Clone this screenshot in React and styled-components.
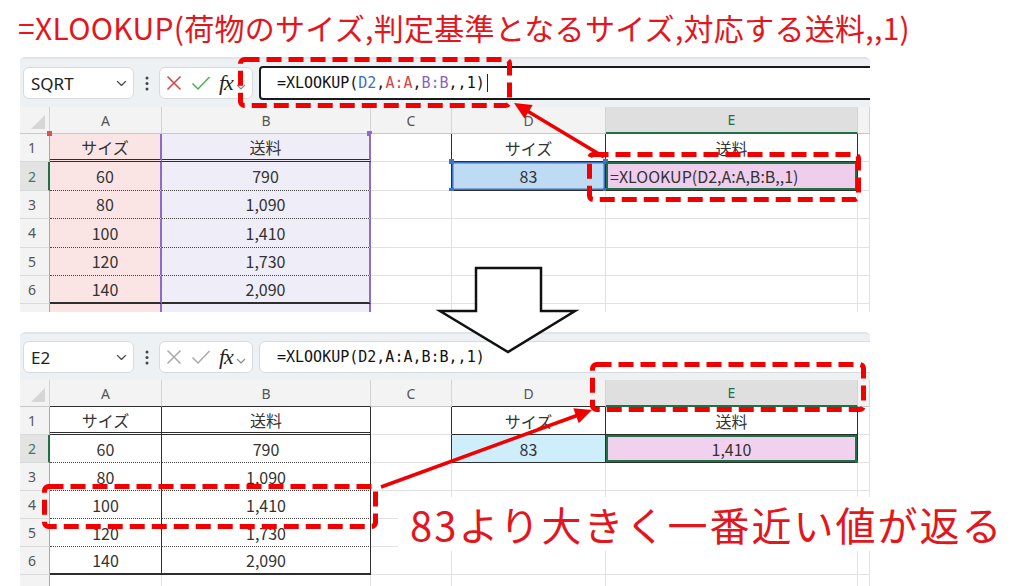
import styled, { createGlobalStyle, css } from "styled-components";

const RED = "#f00000";
const TEXT_RED = "#e3161d";
const GRID = "#e2e2e2";
const DARK = "#2e2e2e";
const GREEN = "#1e7145";
const PURPLE = "#8e6bc9";
const BLUE = "#3f72c4";

const SIZES = ["60", "80", "100", "120", "140"];
const FEES = ["790", "1,090", "1,410", "1,730", "2,090"];
const COLS = ["A", "B", "C", "D", "E"];

const GlobalStyle = createGlobalStyle`
  body {
    margin: 0;
    background: #fff;
    font-family: "Noto Sans CJK JP", "Noto Sans", sans-serif;
  }
`;

const Page = styled.div`
  position: relative;
  width: 1024px;
  height: 586px;
  overflow: hidden;
  background: #fff;
`;

const Title = styled.h1`
  margin: 0;
  height: 57px;
  padding-left: 18px;
  font: 400 30px/54px "Noto Sans CJK JP", sans-serif;
  letter-spacing: 0.3px;
  color: ${TEXT_RED};
  white-space: nowrap;
`;

const Shot = styled.section`
  width: 850px;
  height: ${(p) => p.$h}px;
  margin-left: 20px;
  overflow: hidden;
  background: #fff;
`;

const Gap = styled.div`
  height: 20px;
`;

/* ---- formula bar ---- */

const Toolbar = styled.div`
  display: flex;
  align-items: center;
  height: ${(p) => p.$h}px;
  box-sizing: border-box;
  padding-left: 3px;
  background: #eef1f4;
  border-top: 2px solid #e1e5e9;
  border-radius: 5px 5px 0 0;
`;

const Box = styled.div`
  display: flex;
  align-items: center;
  height: 32px;
  box-sizing: border-box;
  background: #fff;
  border: 1px solid #d7dade;
  border-radius: 6px;
`;

const NameBox = styled(Box)`
  width: 111px;
  justify-content: space-between;
  padding: 0 6px 0 7px;
  font: 400 17px "Noto Sans", sans-serif;
  color: #222;
`;

const Kebab = styled.div`
  width: 25px;
  display: flex;
  justify-content: center;
`;

const FuncBox = styled(Box)`
  width: 94px;
  padding-left: 6px;
`;

const Fx = styled.span`
  margin-left: 8px;
  font: italic 400 22px/1 "Liberation Serif", serif;
  color: #222;
  letter-spacing: -1px;
`;

const FormulaBox = styled(Box)`
  flex: 1;
  margin-left: 6px;
  margin-right: -20px;
  height: ${(p) => (p.$editing ? 34 : 32)}px;
  border: ${(p) => (p.$editing ? `2px solid #1a1a1a` : `1px solid #d7dade`)};
  border-radius: ${(p) => (p.$editing ? 4 : 6)}px;
  padding-left: ${(p) => (p.$editing ? 16 : 17)}px;
  font: 400 15px "DejaVu Sans Mono", monospace;
  color: #111;
  white-space: nowrap;
`;

const Ref = styled.span`
  color: ${(p) => p.$c};
`;

const Caret = styled.span`
  display: inline-block;
  width: 1px;
  height: 18px;
  margin-left: 2px;
  background: #222;
`;

/* ---- grid ---- */

const Grid = styled.div`
  display: grid;
  grid-template-columns: 30px 112px 209px 81px 154px 252px 12px;
  grid-template-rows: 27px repeat(7, ${(p) => p.$row}px);
`;

const Corner = styled.div`
  position: relative;
  background: #f3f3f3;
  border-right: 1px solid #d4d4d4;
  border-bottom: 1px solid #c8c8c8;
  &::after {
    content: "";
    position: absolute;
    right: 4px;
    bottom: 4px;
    border-style: solid;
    border-width: 0 0 14px 14px;
    border-color: transparent transparent #d6d6d6 transparent;
  }
`;

const ColHead = styled.div`
  display: flex;
  align-items: center;
  justify-content: center;
  box-sizing: border-box;
  background: ${(p) => (p.$active ? "#dfdfdf" : "#f3f3f3")};
  color: ${(p) => (p.$active ? GREEN : "#555")};
  border-right: 1px solid #d4d4d4;
  border-bottom: ${(p) => p.$bb};
  font: 400 14px "Noto Sans", sans-serif;
`;

const RowHead = styled.div`
  display: flex;
  align-items: center;
  box-sizing: border-box;
  padding-left: 8px;
  background: ${(p) => (p.$active ? "#e3e3e3" : "#f3f3f3")};
  color: ${(p) => (p.$active ? "#3d7a55" : "#555")};
  border-right: ${(p) => (p.$active ? `2px solid ${GREEN}` : "1px solid #a8a8a8")};
  border-bottom: 1px solid #dadada;
  font: 400 14px "Noto Sans", sans-serif;
`;

const Cell = styled.div`
  position: relative;
  display: flex;
  align-items: center;
  justify-content: ${(p) => (p.$left ? "flex-start" : "center")};
  box-sizing: border-box;
  padding: 0 4px;
  background: ${(p) => p.$fill || "#fff"};
  border-right: ${(p) => p.$br || `1px solid ${GRID}`};
  border-bottom: ${(p) => p.$bb || `1px solid ${GRID}`};
  ${(p) =>
    p.$sel &&
    css`
      box-shadow: inset 0 0 0 ${p.$selW || 2}px ${p.$sel};
    `}
  font: 400 16px "Noto Sans CJK JP", sans-serif;
  color: #333;
  white-space: nowrap;
`;

const Handle = styled.span`
  position: absolute;
  width: 5px;
  height: 5px;
  background: ${(p) => p.$c};
  ${(p) => (p.$top ? "top: -3px;" : "bottom: -3px;")}
  ${(p) => (p.$right ? "right: -3px;" : "left: -3px;")}
`;

const Caption = styled.div`
  position: absolute;
  left: 398px;
  top: 497px;
  padding: 0 12px;
  background: #fff;
  font: 400 40px/54px "Noto Sans CJK JP", sans-serif;
  letter-spacing: 2px;
  color: ${TEXT_RED};
  white-space: nowrap;
`;

const Overlay = styled.svg`
  position: absolute;
  left: 0;
  top: 0;
  pointer-events: none;
`;

/* ---- icons ---- */

const Chevron = ({ color = "#444", size = 11 }) => (
  <svg width={size} height={size * 0.6} viewBox="0 0 10 6">
    <path d="M1 1 L5 5 L9 1" fill="none" stroke={color} strokeWidth="1.2" />
  </svg>
);

const Dots = () => (
  <svg width="4" height="15" viewBox="0 0 4 15">
    <circle cx="2" cy="2" r="1.5" fill="#444" />
    <circle cx="2" cy="7.5" r="1.5" fill="#444" />
    <circle cx="2" cy="13" r="1.5" fill="#444" />
  </svg>
);

const Cancel = ({ color }) => (
  <svg width="16" height="16" viewBox="0 0 16 16">
    <path d="M1.5 1.5 L14.5 14.5 M14.5 1.5 L1.5 14.5" stroke={color} strokeWidth="1.5" fill="none" />
  </svg>
);

const Enter = ({ color }) => (
  <svg width="20" height="16" viewBox="0 0 20 16" style={{ marginLeft: 9 }}>
    <path d="M1.5 8.5 L7 14 L18.5 2" stroke={color} strokeWidth="1.5" fill="none" />
  </svg>
);

function RedArrow({ from, to }) {
  const [x1, y1] = from;
  const [x2, y2] = to;
  const len = Math.hypot(x2 - x1, y2 - y1);
  const ux = (x2 - x1) / len;
  const uy = (y2 - y1) / len;
  const hl = 17;
  const hw = 8;
  const bx = x2 - ux * hl;
  const by = y2 - uy * hl;
  const pts = [
    [x2, y2],
    [bx - uy * hw, by + ux * hw],
    [bx + uy * hw, by - ux * hw],
  ];
  return (
    <g>
      <line x1={x1} y1={y1} x2={bx + ux} y2={by + uy} stroke={RED} strokeWidth="3.5" />
      <polygon points={pts.map((p) => p.join(",")).join(" ")} fill={RED} />
    </g>
  );
}

const DashBox = ({ x, y, w, h }) => (
  <rect
    x={x}
    y={y}
    width={w}
    height={h}
    rx="4"
    fill="none"
    stroke={RED}
    strokeWidth="5"
    strokeDasharray="15 7"
  />
);

/* ---- sheet ---- */

function Sheet({ editing }) {
  const dark = `1px solid ${DARK}`;
  const headBottom = (col) => {
    if (col === "E") return `2px solid ${GREEN}`;
    if (!editing && col !== "C") return dark;
    return "1px solid #c8c8c8";
  };

  // row 7 only peeks in under the table, so its number stays blank
  const rows = [1, 2, 3, 4, 5, 6, 7].map((r) => {
    const inTable = r <= 6;
    const tableBottom =
      r === 1 ? `3px double ${DARK}` : r <= 5 ? `1px dotted #444` : r === 6 ? `2px solid ${DARK}` : undefined;
    const sideBorder = editing ? `2px solid ${PURPLE}` : inTable ? dark : undefined;
    const a = r === 1 ? "サイズ" : inTable ? SIZES[r - 2] : "";
    const b = r === 1 ? "送料" : inTable ? FEES[r - 2] : "";
    const small = r <= 2;
    return [
      <RowHead key={`h${r}`} $active={r === 2}>
        {inTable ? r : ""}
      </RowHead>,
      <Cell key={`a${r}`} $fill={editing ? "#fbe5e4" : "#fff"} $br={sideBorder} $bb={tableBottom}>
        {a}
        {editing && r === 1 && <Handle $c="#d9534f" $top />}
      </Cell>,
      <Cell key={`b${r}`} $fill={editing ? "#efedf8" : "#fff"} $br={sideBorder} $bb={tableBottom}>
        {b}
        {editing && r === 1 && <Handle $c={PURPLE} $top $right />}
      </Cell>,
      <Cell key={`c${r}`} $br={small ? dark : undefined} />,
      <Cell
        key={`d${r}`}
        $br={small ? dark : undefined}
        $bb={small ? dark : undefined}
        $fill={r === 2 ? (editing ? "#bfdbf3" : "#cdeefa") : "#fff"}
        $sel={editing && r === 2 ? BLUE : undefined}
        $selW={1.5}
      >
        {r === 1 ? "サイズ" : r === 2 ? "83" : ""}
        {editing && r === 2 && (
          <>
            <Handle $c={BLUE} $top />
            <Handle $c={BLUE} $top $right />
            <Handle $c={BLUE} />
            <Handle $c={BLUE} $right />
          </>
        )}
      </Cell>,
      <Cell
        key={`e${r}`}
        $br={small ? dark : undefined}
        $bb={small ? dark : undefined}
        $fill={r === 2 ? (editing ? "#efcdec" : "#f2d1ef") : "#fff"}
        $sel={r === 2 ? GREEN : undefined}
        $left={editing && r === 2}
      >
        {r === 1 ? "送料" : r === 2 ? (editing ? "=XLOOKUP(D2,A:A,B:B,,1)" : "1,410") : ""}
        {!editing && r === 2 && <Handle $c={GREEN} $right />}
      </Cell>,
      <Cell key={`f${r}`} />,
    ];
  });

  return (
    <Shot $h={editing ? 255 : 254}>
      <Toolbar $h={editing ? 50 : 48}>
        <NameBox>
          {editing ? "SQRT" : "E2"}
          <Chevron />
        </NameBox>
        <Kebab>
          <Dots />
        </Kebab>
        <FuncBox>
          <Cancel color={editing ? "#d9403f" : "#a9a9a9"} />
          <Enter color={editing ? "#4fae55" : "#a9a9a9"} />
          <Fx>fx</Fx>
          <span style={{ marginLeft: 3 }}>
            <Chevron color="#888" size={10} />
          </span>
        </FuncBox>
        <FormulaBox $editing={editing}>
          {editing ? (
            <>
              =XLOOKUP(<Ref $c="#3a6fc6">D2</Ref>,<Ref $c="#d0464a">A:A</Ref>,<Ref $c="#8a63c0">B:B</Ref>,,1)
              <Caret />
            </>
          ) : (
            "=XLOOKUP(D2,A:A,B:B,,1)"
          )}
        </FormulaBox>
      </Toolbar>
      <Grid $row={editing ? 28.4 : 28}>
        <Corner />
        {COLS.map((c) => (
          <ColHead key={c} $active={c === "E"} $bb={headBottom(c)}>
            {c}
          </ColHead>
        ))}
        <ColHead $bb="1px solid #c8c8c8" />
        {rows}
      </Grid>
    </Shot>
  );
}

export default function App() {
  return (
    <Page>
      <GlobalStyle />
      <Title>=XLOOKUP(荷物のサイズ,判定基準となるサイズ,対応する送料,,1)</Title>
      <Sheet editing />
      <Gap />
      <Sheet />
      <Caption>83より大きく一番近い値が返る</Caption>
      <Overlay width="1024" height="586" viewBox="0 0 1024 586">
        <polygon
          points="476,268 541,268 541,311 575,311 508,352 440,311 476,311"
          fill="#fff"
          stroke="#111"
          strokeWidth="2.5"
          strokeLinejoin="miter"
        />
        <DashBox x={240.5} y={59.5} w={269} h={46} />
        <DashBox x={589.5} y={154.5} w={269} h={45} />
        <DashBox x={592.5} y={364.5} w={271} h={45} />
        <DashBox x={44.5} y={486.5} w={331} h={40} />
        <RedArrow from={[604, 157]} to={[514, 103]} />
        <RedArrow from={[381, 487]} to={[592, 410]} />
      </Overlay>
    </Page>
  );
}
